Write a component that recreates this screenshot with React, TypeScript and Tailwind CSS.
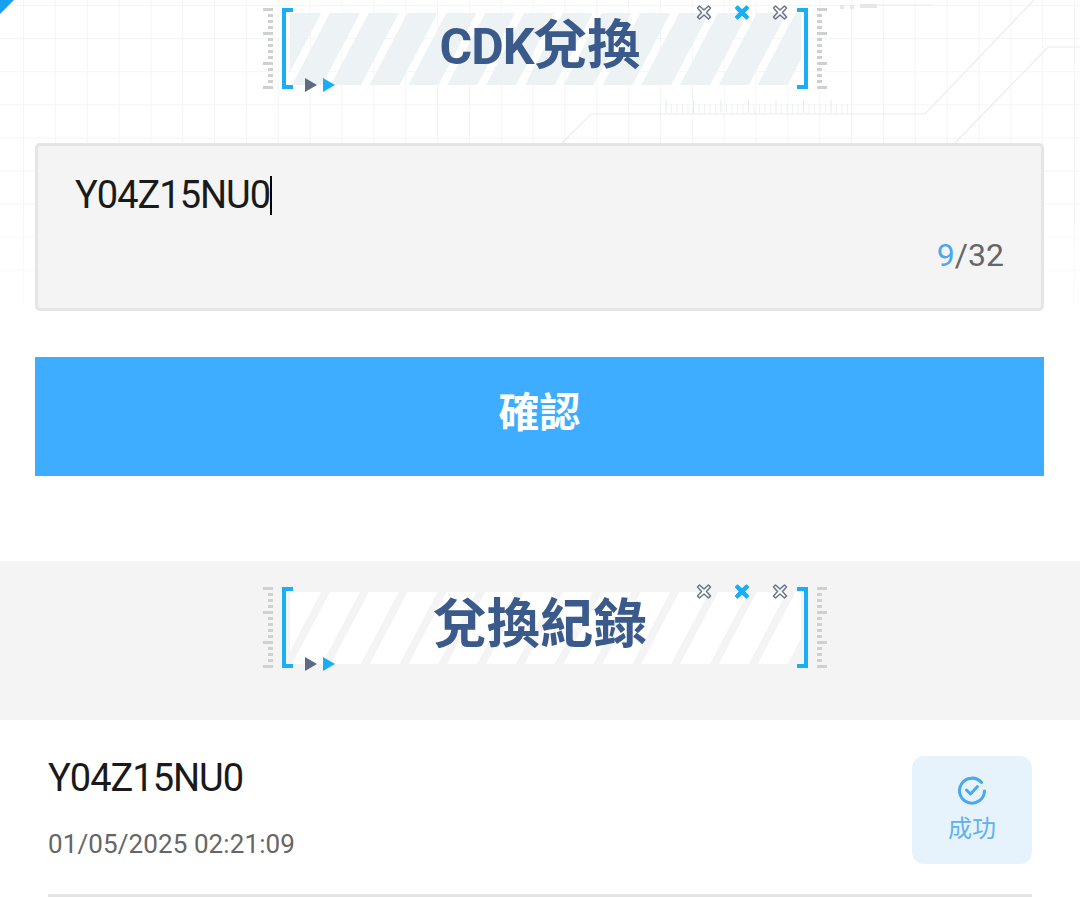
const FONT_STACK = "font-['Roboto','Noto_Sans_CJK_TC',sans-serif]";

const TICK_ROWS = [1.5, 7.5, 13.5, 19.5, 25.5, 31.5, 37.5, 43.5, 49.5, 55.5, 61.5, 67.5, 73.5, 79.5];
const LONG_TICKS = [0, 4, 9, 13];

function XMark({ cx, solid }: { cx: number; solid?: boolean }) {
  const cy = 4.5;
  const pts = [
    [-6.5, -4.5], [-4.5, -6.5], [0, -2.5], [4.5, -6.5], [6.5, -4.5], [2.5, 0],
    [6.5, 4.5], [4.5, 6.5], [0, 2.5], [-4.5, 6.5], [-6.5, 4.5], [-2.5, 0],
  ]
    .map(([x, y]) => `${cx + x},${cy + y}`)
    .join(" ");
  return solid ? (
    <polygon points={pts} fill="#1aaef5" stroke="#1aaef5" strokeWidth="1.2" strokeLinejoin="round" />
  ) : (
    <polygon points={pts} fill="none" stroke="#6b7488" strokeWidth="1.5" strokeLinejoin="round" />
  );
}

// ornament behind the section titles, coordinates are relative to the title box, x starts at 263
function TitleOrnament({ stripe }: { stripe: string }) {
  const stripes = [];
  for (let i = -1; i < 13; i++) {
    const top = 67 + i * 38.8;
    stripes.push(
      <polygon key={i} points={`${top},5 ${top + 30},5 ${top - 8},77 ${top - 38},77`} fill={stripe} />
    );
  }
  return (
    <svg className="absolute top-0 left-[5px] overflow-visible" width="564" height="90" viewBox="0 0 564 90">
      <defs>
        <clipPath id={`band-${stripe.slice(1)}`}>
          <rect x="27" y="5" width="511" height="72" />
        </clipPath>
      </defs>
      <g clipPath={`url(#band-${stripe.slice(1)})`}>{stripes}</g>
      {TICK_ROWS.map((y, i) => {
        const long = LONG_TICKS.includes(i);
        return (
          <g key={y} fill="#cfd0d1">
            <rect x={long ? 0 : 5} y={y - 1.5} width={long ? 10 : 5} height="3" />
            <rect x="554" y={y - 1.5} width={long ? 10 : 5} height="3" />
          </g>
        );
      })}
      <path d="M30 2 H21 V79 H30" fill="none" stroke="#1aaef5" strokeWidth="4" />
      <path d="M534 2 H543 V79 H534" fill="none" stroke="#1aaef5" strokeWidth="4" />
      <polygon points="42,70 42,84 54,77" fill="#5f6a85" />
      <polygon points="60,70 60,84 72,77" fill="#1aaef5" />
      <XMark cx={441} />
      <XMark cx={479} solid />
      <XMark cx={517} />
    </svg>
  );
}

function SectionTitle({ latin, cjk }: { latin?: string; cjk: string }) {
  return (
    <span className="relative -mt-[6px] text-[53.5px] leading-none font-bold text-[#3b5a8c]">
      {latin && <span className="text-[50px] tracking-[-1px]">{latin}</span>}
      {cjk}
    </span>
  );
}

function TitleBlock({ stripe, latin, cjk }: { stripe: string; latin?: string; cjk: string }) {
  return (
    <div className="relative mx-auto flex h-[82px] w-[564px] items-center justify-center">
      <TitleOrnament stripe={stripe} />
      <SectionTitle latin={latin} cjk={cjk} />
    </div>
  );
}

function BackdropGrid() {
  const cols = Array.from({ length: 34 }, (_, i) => 23 + i * 31.85);
  const rows = Array.from({ length: 9 }, (_, i) => 5 + i * 33.1);
  return (
    <svg className="absolute top-0 left-0" width="1080" height="306" viewBox="0 0 1080 306">
      <defs>
        <linearGradient id="fade" x1="0" y1="0" x2="0" y2="1">
          <stop offset="0.7" stopColor="#f4f5f6" />
          <stop offset="1" stopColor="#fbfbfc" />
        </linearGradient>
      </defs>
      {cols.map((x) => (
        <rect key={x} x={x} y="0" width="1" height="306" fill="url(#fade)" />
      ))}
      {rows.map((y, i) => (
        <rect key={y} x="0" y={y} width="1080" height="1" fill={i < 7 ? "#f4f5f6" : "#f9f9fa"} />
      ))}
      <g fill="none" stroke="#ebeced" strokeWidth="1.2">
        <path d="M562 143 L591 114 H925 L1034 0" />
        <path d="M955 143 L1048 47 H1080" />
        <path d="M877 5 H933" />
      </g>
      <g fill="#e6e7e8">
        <rect x="840" y="5" width="4" height="4" />
        <rect x="850" y="5" width="4" height="4" />
        <rect x="860" y="4" width="17" height="4" />
      </g>
      {Array.from({ length: 35 }, (_, i) => (
        <rect
          key={i}
          x={660 + i * 5.5}
          y={i % 5 === 1 ? 100 : 104}
          width="1"
          height={i % 5 === 1 ? 13 : 9}
          fill={i % 5 === 1 ? "#e8e9ea" : "#f0f1f2"}
        />
      ))}
      <polygon points="0,0 14,0 0,14" fill="#1aa0f0" />
    </svg>
  );
}

function SuccessIcon() {
  return (
    <svg width="30" height="30" viewBox="0 0 30 30" fill="none" stroke="#4aa8ef" strokeWidth="3" strokeLinecap="round" strokeLinejoin="round">
      <path d="M24.5 7.5 A12.5 12.5 0 1 0 27.5 16" />
      <path d="M9.5 15 L13.5 19 L20.5 11.5" />
    </svg>
  );
}

export default function App() {
  return (
    <div className={`relative h-[897px] w-full overflow-hidden bg-white ${FONT_STACK}`}>
      <BackdropGrid />
      <div className="relative pt-2">
        <TitleBlock stripe="#edf2f5" latin="CDK" cjk="兌換" />
        <div className="mt-[53px] ml-[35px] h-[168px] w-[1009px] rounded-[5px] border-[3px] border-[#e4e5e6] bg-[#f4f4f4] pt-[27px] pr-[37px] pl-[37px]">
          <div className="flex h-[44px] items-center text-[38px] leading-none tracking-[-1px] text-[#1a1a1a]">
            Y04Z15NU0
            <span className="h-[39px] w-[2px] bg-black" />
          </div>
          <div className="mt-[22px] text-right text-[32px] leading-none text-[#666666]">
            <span className="text-[#4aa8f0]">9</span>/32
          </div>
        </div>
        <div className="mt-[46px] ml-[35px] flex h-[119px] w-[1009px] items-center justify-center bg-[#3eadff] pb-[6px] text-[41px] font-bold text-white">
          確認
        </div>
      </div>
      <div className="mt-[85px] h-[159px] bg-[#f4f4f4] pt-[26px]">
        <TitleBlock stripe="#ffffff" cjk="兌換紀錄" />
      </div>
      <div className="mx-[48px] flex h-[177px] items-start justify-between border-b-[3px] border-[#e3e3e3] pt-[36px]">
        <div>
          <div className="text-[38px] leading-[44px] tracking-[-1px] text-[#1a1a1a]">Y04Z15NU0</div>
          <div className="mt-[28px] text-[26px] leading-[32px] tracking-[0.1px] text-[#666666]">01/05/2025 02:21:09</div>
        </div>
        <div className="flex h-[108px] w-[120px] flex-col items-center rounded-[12px] bg-[#e6f3fd] pt-[19px]">
          <SuccessIcon />
          <span className="mt-[8px] text-[24px] leading-[32px] text-[#62b0ef]">成功</span>
        </div>
      </div>
    </div>
  );
}
